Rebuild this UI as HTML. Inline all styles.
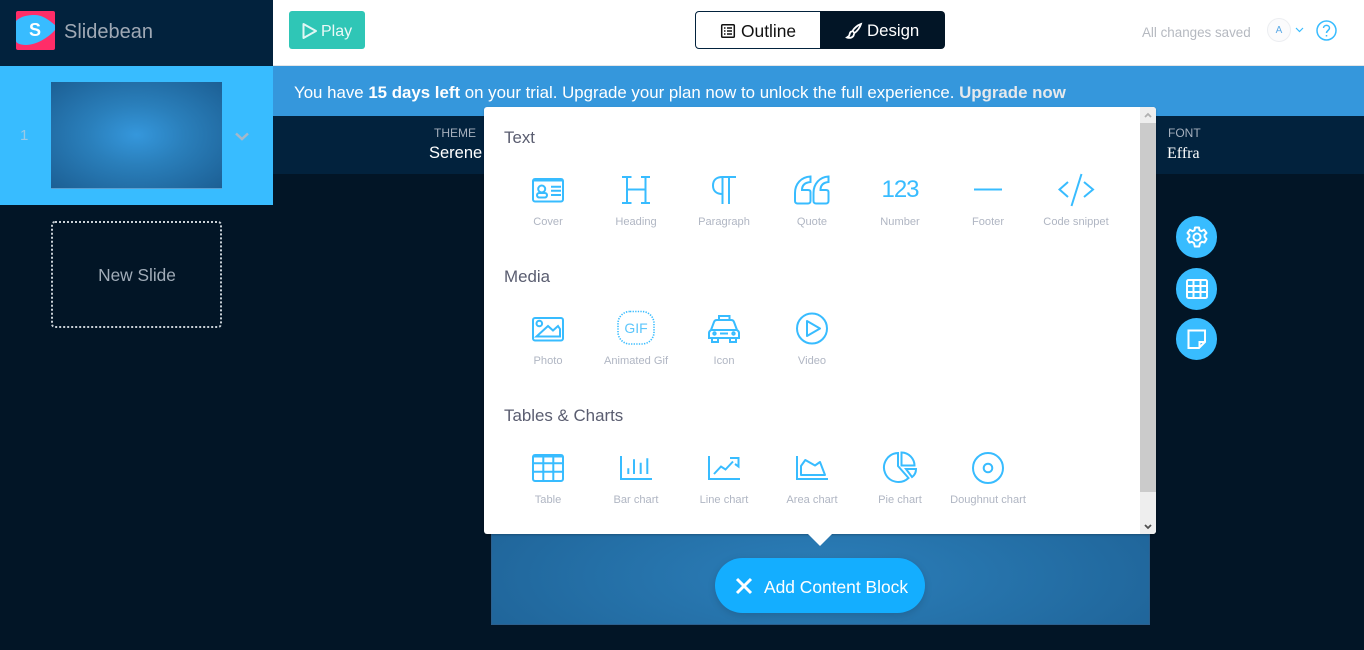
<!DOCTYPE html>
<html><head><meta charset="utf-8">
<style>
html,body{margin:0;padding:0;width:1364px;height:650px;overflow:hidden;background:#021526;font-family:"Liberation Sans",sans-serif}
.a{position:absolute;white-space:nowrap}
.c{transform:translateX(-50%)}
.lab{font-size:11.1px;color:#b0b6c3;top:216px;line-height:13px}
.h{font-size:16.900px;color:#5a5d70;left:504px;line-height:20px}
svg{position:absolute;overflow:visible;fill:none;stroke:#38bcff;stroke-width:2}
svg.i{width:34px;height:34px}
.fab{width:41.500px;height:42px;border-radius:50%;background:#38bcff;left:1175.500px}
</style></head><body>
<div class="a" style="left:0;top:0;width:273px;height:66px;background:#02223d"></div>
<div class="a" style="left:273px;top:0;width:1091px;height:65px;background:#fff;border-bottom:1px solid #e4e6e8"></div>
<div class="a" style="left:273px;top:66px;width:1091px;height:50px;background:#3597dc"></div>
<div class="a" style="left:273px;top:116px;width:1091px;height:58px;background:#02223d"></div>
<div class="a" style="left:0;top:66px;width:273px;height:139px;background:#38bcff"></div>

<svg style="left:16px;top:11px;width:39px;height:39px;stroke:none" viewBox="0 0 39 39"><rect width="39" height="39" rx="2" fill="#ff2d68"/><path d="M0 10C5 5 12 4 19 4C27 4 34 10 39 14V19C32 27 20 34 10 34C4 34 0 32 0 30Z" fill="#38bcff"/></svg>
<div class="a c" style="left:35px;top:19px;font-size:18px;font-weight:bold;color:#fff;line-height:22px">S</div>
<div class="a" style="left:64px;top:20px;font-size:20px;color:#a0a9b5;line-height:24px">Slidebean</div>

<div class="a" style="left:289px;top:11px;width:76px;height:38px;background:#2fc6b6;border-radius:3px"></div>
<svg style="left:302px;top:23px;width:15px;height:16px;stroke:#fff;stroke-opacity:.85" viewBox="0 0 15 16"><path d="M1.500 1L14 8L1.500 15Z" stroke-linejoin="round"/></svg>
<div class="a" style="left:321px;top:22px;font-size:16px;color:#fff;line-height:20px;opacity:.9">Play</div>

<div class="a" style="left:695px;top:11px;width:124px;height:36px;border:1px solid #02223d;border-radius:4px 0 0 4px;background:#fff"></div>
<div class="a" style="left:820px;top:11px;width:125px;height:38px;background:#021526;border-radius:0 4px 4px 0"></div>
<svg style="left:721px;top:24px;width:14px;height:14px;stroke:#111;stroke-width:1.500" viewBox="0 0 14 14"><rect x=".7" y=".7" width="12.600" height="12.600" rx="1"/><path d="M3 4H4.500M6 4H11M3 7H4.500M6 7H11M3 10H4.500M6 10H11"/></svg>
<div class="a" style="left:741px;top:21px;font-size:17.400px;color:#111;line-height:20px">Outline</div>
<svg style="left:846px;top:23px;width:16px;height:16px;stroke:#fff;stroke-width:1.800" viewBox="0 0 16 16"><path d="M15 1C12 2 8 5 6.500 8L8.500 10C11 8.500 14 4.500 15 1ZM6 8.500C3.500 8.500 4 11 3 13L1 14.500C4 15.500 8 14.500 8 10.500"/></svg>
<div class="a" style="left:867px;top:21px;font-size:16.800px;color:#fff;line-height:20px">Design</div>

<div class="a" style="left:1142px;top:25px;font-size:13.400px;color:#b5b9c0;line-height:16px">All changes saved</div>
<div class="a" style="left:1267px;top:18px;width:22px;height:22px;border:1px solid #eceef1;border-radius:50%;background:#fbfbfc"></div>
<div class="a c" style="left:1279px;top:25px;font-size:10px;color:#5aa9e6;line-height:12px">A</div>
<svg style="left:1295px;top:27px;width:9px;height:6px;stroke-width:1.200" viewBox="0 0 9 6"><path d="M1 1L4.500 4.500L8 1"/></svg>
<svg style="left:1316px;top:20px;width:21px;height:21px;stroke-width:1.500" viewBox="0 0 21 21"><circle cx="10.500" cy="10.500" r="9.500"/><path d="M7.500 8C7.500 4.500 13.500 4.500 13.500 8C13.500 10.500 10.500 10.500 10.500 13"/><path d="M10.500 15V16.500"/></svg>

<div class="a" style="left:20px;top:127px;font-size:15px;color:#9bc9e6;line-height:18px">1</div>
<div class="a" style="left:51px;top:82px;width:171px;height:107px;background:radial-gradient(ellipse at center,#3597dc 0%,#2a7fbb 40%,#1c5f94 100%);border-bottom:1px solid #5b9fd0;box-sizing:border-box"></div>
<svg style="left:235px;top:132px;width:14px;height:9px;stroke:#a6b8c9;stroke-width:2.500" viewBox="0 0 14 9"><path d="M1 1.500L7 7L13 1.500"/></svg>

<div class="a" style="left:51px;top:221px;width:171px;height:107px;box-sizing:border-box;border:2px dotted #c9d0d6;border-radius:4px"></div>
<div class="a c" style="left:137px;top:265px;font-size:17.300px;color:#a1acb8;line-height:20px">New Slide</div>

<div class="a" style="left:294px;top:83px;font-size:16.850px;color:#fff;line-height:20px">You have <b>15 days left</b> on your trial. Upgrade your plan now to unlock the full experience. <b style="color:#e6e9ec">Upgrade now</b></div>
<div class="a c" style="left:455px;top:126px;font-size:12px;color:#a6b0bd;line-height:14px">THEME</div>
<div class="a" style="left:429px;top:144px;font-size:16.500px;color:#fff;line-height:19px">Serene</div>
<div class="a" style="left:1168px;top:126px;font-size:12px;color:#a6b0bd;line-height:14px">FONT</div>
<div class="a" style="left:1167px;top:145px;font-size:16px;color:#fff;line-height:18px;font-family:'Liberation Serif',serif">Effra</div>

<div class="a" style="left:491px;top:500px;width:659px;height:125px;box-sizing:border-box;border:1px solid #2c5f8d;background:radial-gradient(ellipse 420px 130px at center 75px,#2c7fba 0%,#246fa6 55%,#1e6195 100%)"></div>

<div class="a" style="left:484px;top:107px;width:672px;height:427px;background:#fff;border-radius:3px;box-shadow:0 1px 2px rgba(0,0,0,.25)"></div>
<div class="a" style="left:1140px;top:107px;width:16px;height:427px;background:#eee;border-radius:0 3px 3px 0"></div>
<div class="a" style="left:1140px;top:123px;width:16px;height:369px;background:#cbcbcb"></div>
<svg style="left:1144px;top:112px;width:8px;height:6px;stroke:#b0b0b0;stroke-width:1.800" viewBox="0 0 8 6"><path d="M1 5L4 2L7 5"/></svg>
<svg style="left:1144px;top:524px;width:8px;height:6px;stroke:#505050;stroke-width:1.800" viewBox="0 0 8 6"><path d="M1 1L4 4L7 1"/></svg>
<div class="a" style="left:808px;top:534px;width:0;height:0;border-left:12.500px solid transparent;border-right:12.500px solid transparent;border-top:12px solid #fff"></div>

<div class="a h" style="top:128px">Text</div>
<div class="a h" style="top:267px">Media</div>
<div class="a h" style="top:406px">Tables &amp; Charts</div>

<!-- Text row -->
<svg class="i" style="left:531px;top:173px" viewBox="0 0 34 34"><rect x="2" y="6" width="30" height="22.500" rx="2"/><path d="M2 7H32" stroke-width="3"/><circle cx="10.700" cy="16" r="3.500"/><rect x="6" y="20" width="10" height="4.500" rx="2.200"/><path d="M20 13.700H30M20 17.700H30M20 22H30"/></svg>
<svg class="i" style="left:619px;top:173px" viewBox="0 0 34 34"><path d="M3 4H12.500M8 4V30M3 30H12.500M22 4H31M26.500 4V30M22 30H31M8 16.500H26.500" stroke-width="2"/></svg>
<svg class="i" style="left:707px;top:173px" viewBox="0 0 34 34"><path d="M29 4H15.500C9 4 6 7.500 6 12.500C6 17.500 9 21 15.500 21M15.500 4V31M22 4V31" stroke-width="2"/></svg>
<svg class="i" style="left:795px;top:173px" viewBox="0 0 34 34"><path d="M15.500 3.500C6 4 0 11 0 20V28C0 29.500 1 30.500 2.500 30.500H13C14.500 30.500 15.500 29.500 15.500 28V19C15.500 17.500 14.500 17 13 17H7C7 12 10 9.500 15.500 9ZM33.500 3.500C24.500 4 18.500 11 18.500 20V28C18.500 29.500 19.500 30.500 21 30.500H31C32.500 30.500 33.500 29.500 33.500 28V19C33.500 17.500 32.500 17 31 17H25.500C25.500 12 28.500 9.500 33.500 9Z" stroke-width="2"/></svg>
<div class="a c" style="left:900px;top:176px;font-size:24px;letter-spacing:-1px;color:#38bcff;line-height:28px">123</div>
<svg class="i" style="left:971px;top:173px" viewBox="0 0 34 34"><path d="M3 16.500H31"/></svg>
<svg style="left:1058px;top:173px;width:36px;height:34px" viewBox="0 0 36 34"><path d="M10 9L1.500 16.500L10 24M26 9L35 16.500L26 24M23.500 1L13.500 33" stroke-width="2"/></svg>
<div class="a c lab" style="left:548px">Cover</div>
<div class="a c lab" style="left:636px">Heading</div>
<div class="a c lab" style="left:724px">Paragraph</div>
<div class="a c lab" style="left:812px">Quote</div>
<div class="a c lab" style="left:900px">Number</div>
<div class="a c lab" style="left:988px">Footer</div>
<div class="a c lab" style="left:1076px">Code snippet</div>

<!-- Media row -->
<svg class="i" style="left:531px;top:312px" viewBox="0 0 34 34"><rect x="2" y="6" width="30" height="22.500" rx="2"/><circle cx="8.300" cy="11.500" r="2.800"/><path d="M5.500 24.500L17 14L22 18.500L27 14L29 17V24.500Z"/></svg>
<svg class="i" style="left:619px;top:312px" viewBox="0 0 34 34"><rect x="-1" y="-.5" width="36" height="32.500" rx="12" stroke-width="1.600" stroke-dasharray="1.300 1.300"/></svg>
<div class="a c" style="left:636px;top:320px;font-size:14px;color:#5dc6fb;line-height:17px">GIF</div>
<svg class="i" style="left:707px;top:311px" viewBox="0 0 34 34"><path d="M12 9V5H22.500V9M4 19L7 11C7.500 9.500 8.500 9 10 9H24C25.500 9 26.500 9.500 27 11L30 19M4 19C2.500 20 2 21 2 22V27H32V22C32 21 31.500 20 30 19ZM5 27V31H11V27M23 27V31H29V27M13 22.500H21"/><circle cx="7.500" cy="22.500" r="1.200"/><circle cx="26.500" cy="22.500" r="1.200"/></svg>
<svg class="i" style="left:795px;top:312px" viewBox="0 0 34 34"><circle cx="17" cy="16.500" r="15"/><path d="M12 9L25 16.500L12 24Z" stroke-linejoin="round"/></svg>
<div class="a c lab" style="left:548px;top:355px">Photo</div>
<div class="a c lab" style="left:636px;top:355px">Animated Gif</div>
<div class="a c lab" style="left:724px;top:355px">Icon</div>
<div class="a c lab" style="left:812px;top:355px">Video</div>

<!-- Charts row -->
<svg class="i" style="left:531px;top:451px" viewBox="0 0 34 34"><rect x="2" y="4" width="30" height="26" rx="2"/><path d="M2 5H32" stroke-width="3"/><path d="M2 12.300H32M2 20.700H32M12.300 4V30M22.300 4V30"/></svg>
<svg class="i" style="left:619px;top:451px" viewBox="0 0 34 34"><path d="M2 5V28H33"/><path d="M9.300 23V17.300M15 23V8.300M21.700 23V11.700M28.300 23V7.300"/></svg>
<svg class="i" style="left:707px;top:451px" viewBox="0 0 34 34"><path d="M2 5V28H33"/><path d="M7 23L14 15.500L18.500 18.500L26 10.500"/><path d="M23 7H31.500V15.500L28 13"/></svg>
<svg class="i" style="left:795px;top:451px" viewBox="0 0 34 34"><path d="M2 5V28H33"/><path d="M6 24V15L10.300 9L20 14.500L25 11L30 24Z" stroke-linejoin="round"/></svg>
<svg class="i" style="left:883px;top:451px" viewBox="0 0 34 34"><path d="M15 2A14.500 14.500 0 1 0 25.500 27L15 15Z"/><path d="M18.500 1.500C26 1.500 31.500 8 31.500 14.500H18.500Z"/><path d="M23 18H33C33 21 32 24 29 26Z"/></svg>
<svg class="i" style="left:971px;top:451px" viewBox="0 0 34 34"><circle cx="17" cy="17" r="15"/><circle cx="17" cy="17" r="4.300"/></svg>
<div class="a c lab" style="left:548px;top:494px">Table</div>
<div class="a c lab" style="left:636px;top:494px">Bar chart</div>
<div class="a c lab" style="left:724px;top:494px">Line chart</div>
<div class="a c lab" style="left:812px;top:494px">Area chart</div>
<div class="a c lab" style="left:900px;top:494px">Pie chart</div>
<div class="a c lab" style="left:988px;top:494px">Doughnut chart</div>

<!-- FABs -->
<div class="a fab" style="top:216px"></div>
<div class="a fab" style="top:268px"></div>
<div class="a fab" style="top:318px"></div>
<svg style="left:1186px;top:226px;width:22px;height:22px;stroke:#fff;stroke-width:2" viewBox="0 0 22 22"><circle cx="11" cy="11" r="3.500"/><path d="M9 1.500H13L13.500 4.300L15.500 5.200L18 3.700L20.500 7L18.500 9L18.700 11L20.500 13L18.500 16.500L16 15.800L14 17.200L13.200 20.500H8.800L8 17.200L6 15.800L3.500 16.500L1.500 13L3.300 11L3.500 9L1.500 7L4 3.700L6.500 5.200L8.500 4.300Z" stroke-linejoin="round"/></svg>
<svg style="left:1186px;top:279px;width:22px;height:20px;stroke:#fff;stroke-width:2" viewBox="0 0 22 20"><rect x="1" y="1" width="20" height="18" rx="1.500"/><path d="M1 7H21M1 13H21M7.500 1V19M14.500 1V19"/></svg>
<svg style="left:1187px;top:329px;width:19px;height:20px;stroke:#fff;stroke-width:2" viewBox="0 0 19 20"><path d="M1.500 1.500H18V13L12 19H1.500ZM18 13H12.500V19"/></svg>

<!-- Add button -->
<div class="a" style="left:715px;top:558px;width:210px;height:55px;border-radius:28px;background:#14aeff;box-shadow:0 2px 8px rgba(0,0,0,.15)"></div>
<svg style="left:735px;top:577px;width:18px;height:18px;stroke:#fff;stroke-width:3" viewBox="0 0 18 18"><path d="M2 2L16 16M16 2L2 16"/></svg>
<div class="a" style="left:764px;top:577px;font-size:17.400px;color:#fff;line-height:21px">Add Content Block</div>
</body></html>
